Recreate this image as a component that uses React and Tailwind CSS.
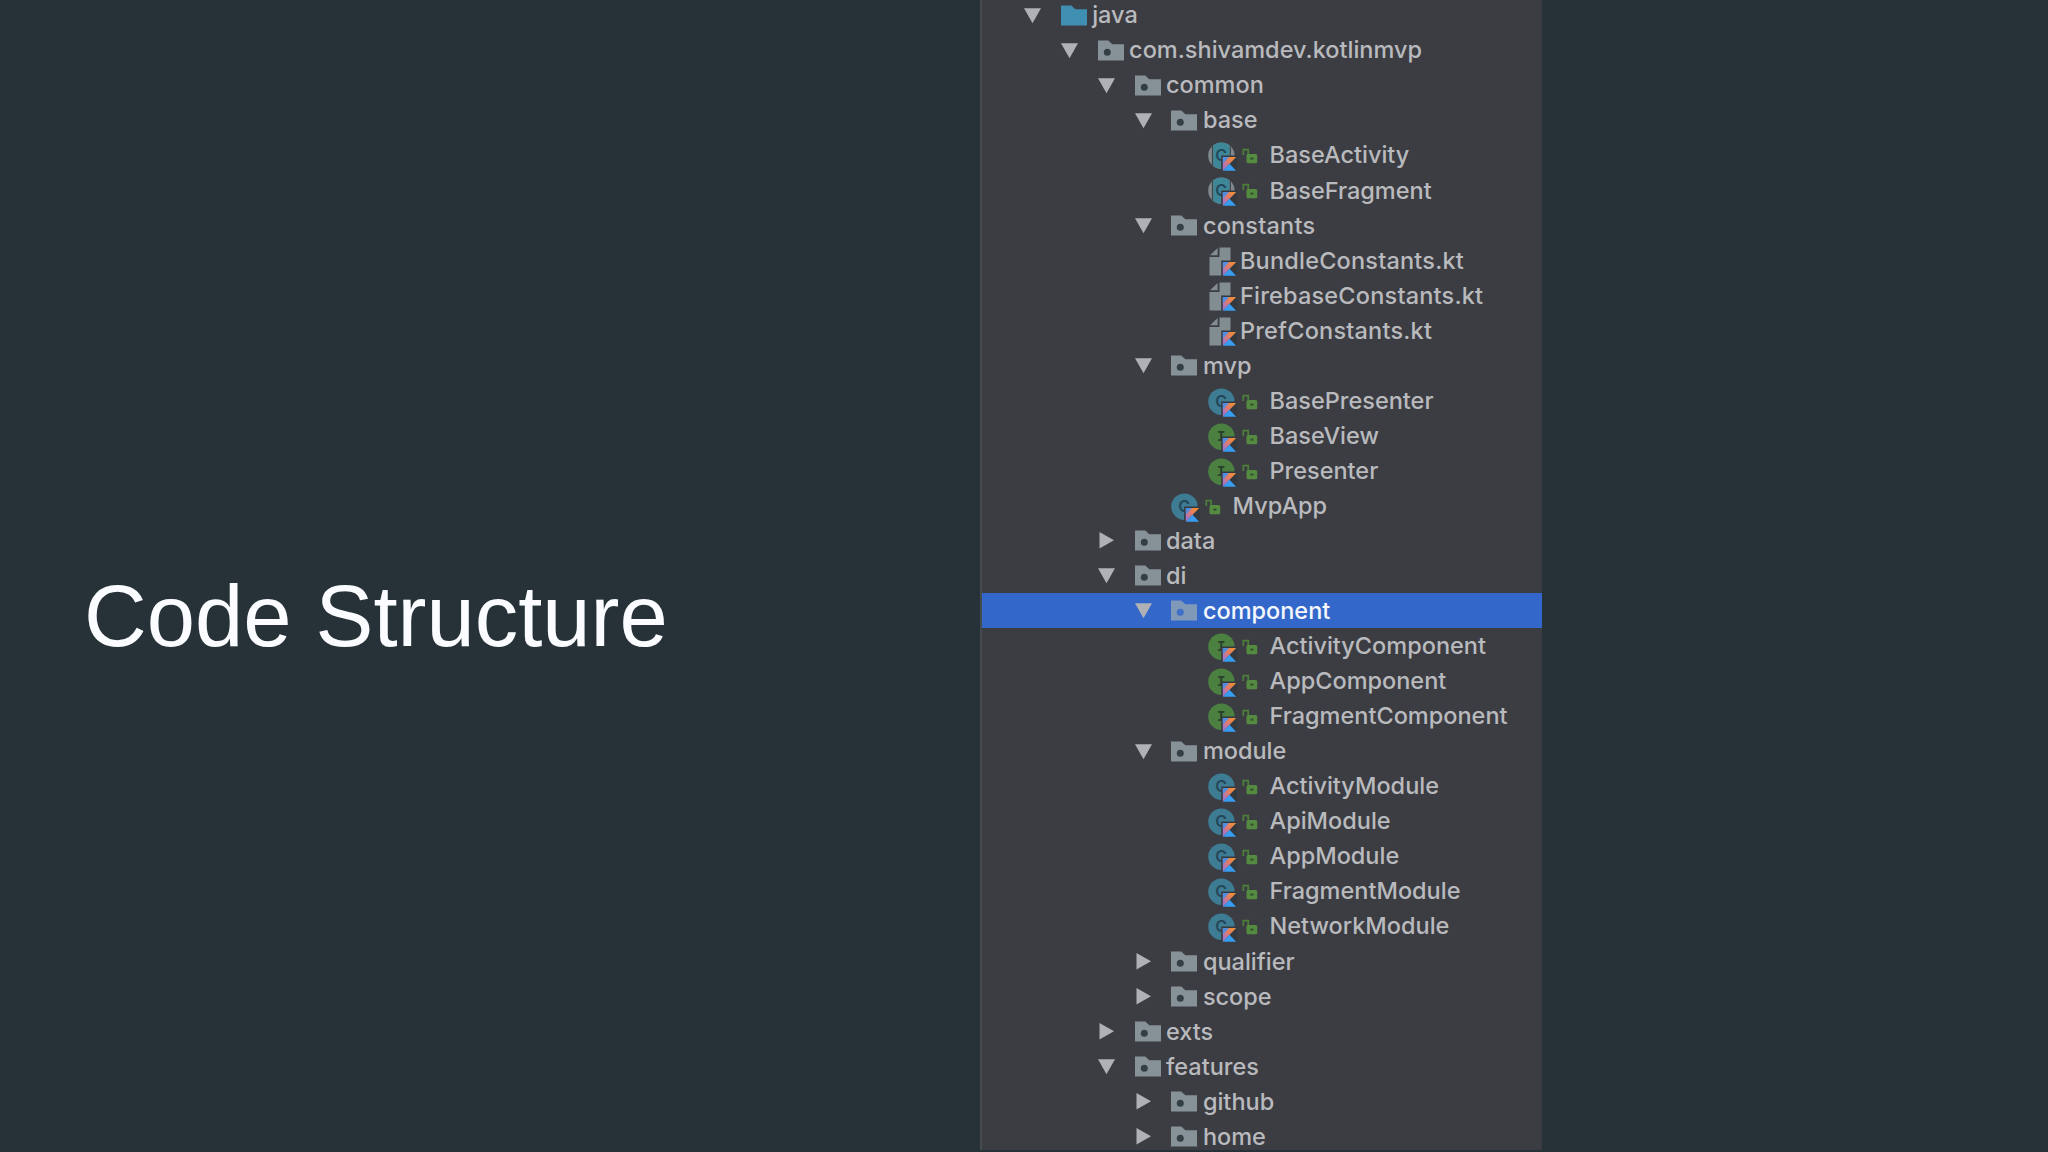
import { clsx } from 'clsx'

const INDENT = 36.9
const BASE_PADDING = 42

const rows = [
  { name: 'java', depth: 0, type: 'source', open: true },
  { name: 'com.shivamdev.kotlinmvp', depth: 1, type: 'package', open: true },
  { name: 'common', depth: 2, type: 'package', open: true },
  { name: 'base', depth: 3, type: 'package', open: true },
  { name: 'BaseActivity', depth: 4, type: 'abstract' },
  { name: 'BaseFragment', depth: 4, type: 'abstract' },
  { name: 'constants', depth: 3, type: 'package', open: true },
  { name: 'BundleConstants.kt', depth: 4, type: 'file' },
  { name: 'FirebaseConstants.kt', depth: 4, type: 'file' },
  { name: 'PrefConstants.kt', depth: 4, type: 'file' },
  { name: 'mvp', depth: 3, type: 'package', open: true },
  { name: 'BasePresenter', depth: 4, type: 'class' },
  { name: 'BaseView', depth: 4, type: 'interface' },
  { name: 'Presenter', depth: 4, type: 'interface' },
  { name: 'MvpApp', depth: 3, type: 'class' },
  { name: 'data', depth: 2, type: 'package', open: false },
  { name: 'di', depth: 2, type: 'package', open: true },
  { name: 'component', depth: 3, type: 'package', open: true, selected: true },
  { name: 'ActivityComponent', depth: 4, type: 'interface' },
  { name: 'AppComponent', depth: 4, type: 'interface' },
  { name: 'FragmentComponent', depth: 4, type: 'interface' },
  { name: 'module', depth: 3, type: 'package', open: true },
  { name: 'ActivityModule', depth: 4, type: 'class' },
  { name: 'ApiModule', depth: 4, type: 'class' },
  { name: 'AppModule', depth: 4, type: 'class' },
  { name: 'FragmentModule', depth: 4, type: 'class' },
  { name: 'NetworkModule', depth: 4, type: 'class' },
  { name: 'qualifier', depth: 3, type: 'package', open: false },
  { name: 'scope', depth: 3, type: 'package', open: false },
  { name: 'exts', depth: 2, type: 'package', open: false },
  { name: 'features', depth: 2, type: 'package', open: true },
  { name: 'github', depth: 3, type: 'package', open: false },
  { name: 'home', depth: 3, type: 'package', open: false },
]

function Arrow({ open }) {
  return (
    <svg viewBox="0 0 17 17" className="mt-px h-[17px] w-[17px] shrink-0 fill-[#b0b1b4]">
      <path d={open ? 'M0 1.3h17L8.5 16.3z' : 'M1.5 0.1v16.4L16 8.3z'} />
    </svg>
  )
}

function Folder({ source, selected }) {
  return (
    <svg viewBox="0 0 26 21" className="mt-px h-[21px] w-[26px] shrink-0">
      <path
        d="M0 0.5h10.3l4 3.7H26v16.3H0z"
        className={clsx(source ? 'fill-[#3f8fb3]' : selected ? 'fill-[#8099b8]' : 'fill-[#869297]')}
      />
      {!source && (
        <circle cx="9.3" cy="12.2" r="3.5" className={selected ? 'fill-[#3e6fc9]' : 'fill-[#323f45]'} />
      )}
    </svg>
  )
}

// Small Kotlin mark in the lower right corner of a file or class icon
function KotlinBadge() {
  return (
    <g>
      <path d="M13.2 13.5H29V29H13.2z" fill="#343940" />
      <path d="M14.8 15H28.2L14.8 28.7z" fill="url(#kotlin-top)" />
      <path d="M14.8 28.7l6.7-6.9 6.7 6.9z" fill="#389cf0" />
      <path d="M14.8 15H21l-6.2 6.6z" fill="#4f8ee0" />
    </g>
  )
}

function ClassIcon({ type }) {
  const isInterface = type === 'interface'
  return (
    <svg viewBox="0 0 29 29" className="mt-1 h-[29px] w-[29px] shrink-0">
      {type === 'abstract' ? (
        <>
          <circle cx="13.4" cy="13.7" r="13.2" fill="#7f898d" />
          <path d="M4.6 3.9v19.6M22.2 3.9v19.6" stroke="#3d444a" strokeWidth="1.4" />
          <path d="M5.3 3.3a13.2 13.2 0 0 1 16.2 0v20.8a13.2 13.2 0 0 1-16.2 0z" fill="#3d8798" />
        </>
      ) : (
        <circle cx="13.4" cy="13.7" r="13.2" fill={isInterface ? '#4b8040' : '#3d7c92'} />
      )}
      <text
        x="13.2"
        y={isInterface ? 18.2 : 18.6}
        textAnchor="middle"
        className={clsx(
          isInterface
            ? "fill-[#29402c] font-['Liberation_Mono'] text-[14px] font-bold"
            : "fill-[#24475a] font-['Inter'] text-[16px] font-semibold"
        )}
      >
        {isInterface ? 'I' : 'C'}
      </text>
      <KotlinBadge />
    </svg>
  )
}

function FileIcon() {
  return (
    <svg viewBox="0 0 29 29" className="mt-[3px] h-[29px] w-[29px] shrink-0">
      <path d="M11.5 0.5h11v28h-21V10h10z" fill="#828d92" />
      <path d="M9.6 1v7.2H2z" fill="#828d92" />
      <KotlinBadge />
    </svg>
  )
}

function OpenLock() {
  return (
    <svg viewBox="0 0 16 16" className="mt-[3px] h-4 w-4 shrink-0">
      <path d="M1.3 7V1.7h4.9v5" fill="none" stroke="#4b8038" strokeWidth="1.7" />
      <rect x="4.5" y="6" width="10.7" height="9.3" rx="1.6" fill="#558b40" />
      <path d="M8.2 9.6h3.3v2H8.2z" fill="#35502f" />
    </svg>
  )
}

function TreeRow({ row }) {
  const { name, depth, type, open, selected } = row
  const isFolder = type === 'source' || type === 'package'
  const hasLock = !isFolder && type !== 'file'

  return (
    <div
      className={clsx('flex h-[35.06px] shrink-0 items-center', selected && 'bg-[#3367c9]')}
      style={{ paddingLeft: BASE_PADDING + depth * INDENT }}
    >
      <div className="flex w-[36.8px] shrink-0">{isFolder && <Arrow open={open} />}</div>
      {isFolder && <Folder source={type === 'source'} selected={selected} />}
      {type === 'file' && <FileIcon />}
      {hasLock && (
        <>
          <ClassIcon type={type} />
          <div className="ml-[5px] flex">
            <OpenLock />
          </div>
        </>
      )}
      <span
        className={clsx(
          "mt-px whitespace-nowrap font-['Inter',sans-serif] text-[23.5px] leading-none font-medium",
          isFolder && 'ml-[5.4px]',
          name.includes('onstants') && 'tracking-[0.2px]',
          type === 'file' && 'ml-[2.6px]',
          hasLock && 'ml-[11.1px]',
          selected ? 'text-[#f4f7fc]' : 'text-[#b9babd]'
        )}
      >
        {name}
      </span>
    </div>
  )
}

export default function App() {
  return (
    <div className="flex h-screen overflow-hidden bg-[#263238]">
      <svg className="absolute h-0 w-0" aria-hidden="true">
        <defs>
          <linearGradient id="kotlin-top" x1="0" y1="1" x2="1" y2="0">
            <stop offset="0.2" stopColor="#a977c4" />
            <stop offset="0.5" stopColor="#dd7a72" />
            <stop offset="0.8" stopColor="#ee8b3c" />
          </linearGradient>
        </defs>
      </svg>

      <section className="flex w-[980px] shrink-0 items-center pl-[84px]">
        <h1 className="mt-[81px] whitespace-nowrap font-['Liberation_Sans',sans-serif] text-[86.8px] leading-none text-[#fafcff]">
          Code Structure
        </h1>
      </section>

      <aside className="flex h-[1150px] w-[562px] shrink-0 flex-col overflow-hidden border-l-2 border-[#464b4f] bg-[#3c3d43]">
        <div className="-mt-[3px] flex flex-col">
          {rows.map((row) => (
            <TreeRow key={row.name} row={row} />
          ))}
        </div>
      </aside>
    </div>
  )
}
